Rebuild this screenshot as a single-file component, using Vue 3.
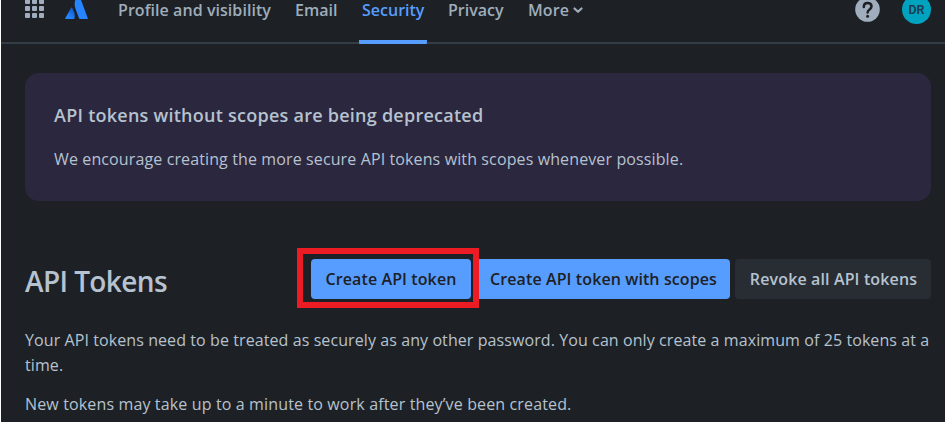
<script setup>
const tabs = [
  { label: 'Profile and visibility', cls: 'profile' },
  { label: 'Email', cls: 'email' },
  { label: 'Security', cls: 'security' },
  { label: 'Privacy', cls: 'privacy' },
  { label: 'More', cls: 'more' },
]
</script>

<template>
  <div class="page">
    <header class="topbar">
      <svg class="grid-icon" width="19" height="20" viewBox="0 0 19 20" fill="#9fadbc">
        <template v-for="r in 3" :key="r">
          <rect v-for="c in 3" :key="c" :x="c * 7 - 7" :y="r * 7 - 7" width="5" height="5" rx="1" />
        </template>
      </svg>
      <svg class="logo" width="23" height="23" viewBox="0 0 23 23">
        <defs>
          <linearGradient id="fold" x1="0.9" y1="0.1" x2="0.3" y2="1">
            <stop offset="0" stop-color="#0a55d0" />
            <stop offset="0.8" stop-color="#2684ff" />
          </linearGradient>
        </defs>
        <path d="M7.2 11.9c-.4-.5-.9-.4-1.200.1L.2 22.200c-.2.500 0 .8.500.8h8c.5 0 .8-.2.900-.7.600-3.200-.4-7.500-2.400-10.400z" fill="url(#fold)" />
        <path d="M12 .5C9.400 4.300 9.100 8.800 10.400 12.500l3.600 9.800c.2.500.5.700 1 .7h7.300c.5 0 .7-.3.500-.8L16.200 4.500 13.500.4c-.5-.6-1.100-.5-1.500.1z" fill="#2684ff" />
      </svg>
      <nav class="tabs">
        <a v-for="t in tabs" :key="t.label" :class="['tab', t.cls]">
          <span>{{ t.label }}</span>
          <svg v-if="t.cls === 'more'" class="chevron" width="10" height="7" viewBox="0 0 10 7">
            <path d="M1.5 1.5 5 4.8 8.5 1.5" fill="none" stroke="#9fadbc" stroke-width="2.2" stroke-linecap="round" stroke-linejoin="round" />
          </svg>
        </a>
      </nav>
      <svg class="help" width="25" height="25" viewBox="0 0 25 25">
        <circle cx="12.5" cy="12.5" r="12.3" fill="#9fadbc" />
        <path d="M8.8 10c0-2.400 1.500-3.900 3.800-3.900s3.900 1.400 3.900 3.400c0 2.800-3.900 3-3.900 5.900" fill="none" stroke="#1d2125" stroke-width="2.500" stroke-linecap="round" />
        <circle cx="12.6" cy="19.3" r="1.5" fill="#1d2125" />
      </svg>
      <div class="avatar">DR</div>
    </header>

    <main class="content">
      <section class="banner">
        <h2>API tokens without scopes are being deprecated</h2>
        <p>We encourage creating the more secure API tokens with scopes whenever possible.</p>
      </section>
      <div class="heading-row">
        <h1>API Tokens</h1>
        <div class="marked"><button class="btn primary first">Create API token</button></div>
        <button class="btn primary second">Create API token with scopes</button>
        <button class="btn neutral">Revoke all API tokens</button>
      </div>
      <p class="copy">Your API tokens need to be treated as securely as any other password. You can only create a maximum of 25 tokens at a<br />time.</p>
      <p class="copy last">New tokens may take up to a minute to work after they’ve been created.</p>
    </main>
  </div>
</template>

<style>
body { background: #1d2125; overflow: hidden; }
</style>

<style scoped>
.page {
  box-sizing: border-box;
  width: 945px;
  height: 422px;
  overflow: hidden;
  border-left: 1px solid #fff;
  background: #1d2125;
  color: #b6c2cf;
  font-family: "Open Sans", "Noto Sans", sans-serif;
  font-size: 16px;
}
.topbar {
  box-sizing: border-box;
  height: 44px;
  border-bottom: 2px solid #343c45;
  display: flex;
  align-items: flex-start;
  color: #9fadbc;
}
.topbar > * { flex: none; }
.grid-icon { margin: -1px 0 0 24px; }
.logo { margin: -4px 0 0 21px; }
.tabs { display: flex; margin-left: 22px; width: 743px; }
.tab {
  box-sizing: border-box;
  height: 44px;
  padding: 0 8px;
  line-height: 20px;
  font-weight: 600;
  white-space: nowrap;
  display: flex;
}
.profile { width: 177px; letter-spacing: 0.06px; }
.email { width: 64px; margin-right: 8px; }
.security {
  width: 68px;
  margin-right: 13px;
  padding-left: 3px;
  color: #579dff;
  border-bottom: 4px solid #579dff;
  border-radius: 1px;
}
.privacy { width: 80px; }
.more { letter-spacing: 0.1px; }
.chevron { margin: 7px 0 0 4px; }
.help { margin: -3px 0 0 2px; }
.avatar {
  margin: -5px 0 0 22px;
  width: 29px;
  height: 29px;
  border-radius: 50%;
  background: #00a3bf;
  color: #1c3a50;
  font: 600 12.5px/29px Roboto, sans-serif;
  text-align: center;
}
.content { padding: 29px 14px 0 24px; }
.banner {
  box-sizing: border-box;
  height: 128px;
  border-radius: 14px;
  background: #2b273f;
  padding: 30px 29px 0;
}
h1, h2, p { margin: 0; white-space: nowrap; }
h2 { font-size: 18px; line-height: 24px; font-weight: 600; letter-spacing: 0.25px; }
.banner p { margin-top: 20px; line-height: 24px; letter-spacing: 0.12px; }
.heading-row { display: flex; align-items: flex-start; height: 60px; margin-top: 47px; }
h1 { width: 272px; padding-top: 15px; font-size: 28px; line-height: 36px; font-weight: 600; letter-spacing: -0.6px; }
.marked {
  box-sizing: border-box;
  width: 182px;
  height: 60px;
  border: 6px solid #ed1c24;
  padding: 5px 2px 5px 8px;
  flex: none;
}
.btn {
  box-sizing: border-box;
  display: block;
  height: 40px;
  border: 0;
  border-radius: 4px;
  padding: 0;
  font: 600 16px/40px "Open Sans", "Noto Sans", sans-serif;
  letter-spacing: 0.1px;
  white-space: nowrap;
  flex: none;
}
.primary { background: #579dff; color: #1d2125; }
.first { width: 160px; }
.second { width: 251px; margin: 11px 5px 0 0; padding-right: 2px; border-radius: 0 4px 4px 0; }
.neutral { width: 196px; margin-top: 11px; padding-left: 1px; background: #282d33; color: #b6c2cf; letter-spacing: 0.13px; }
.copy { margin-top: 20px; line-height: 25px; letter-spacing: 0.087px; }
.last { margin-top: 14px; letter-spacing: 0.14px; }
</style>
